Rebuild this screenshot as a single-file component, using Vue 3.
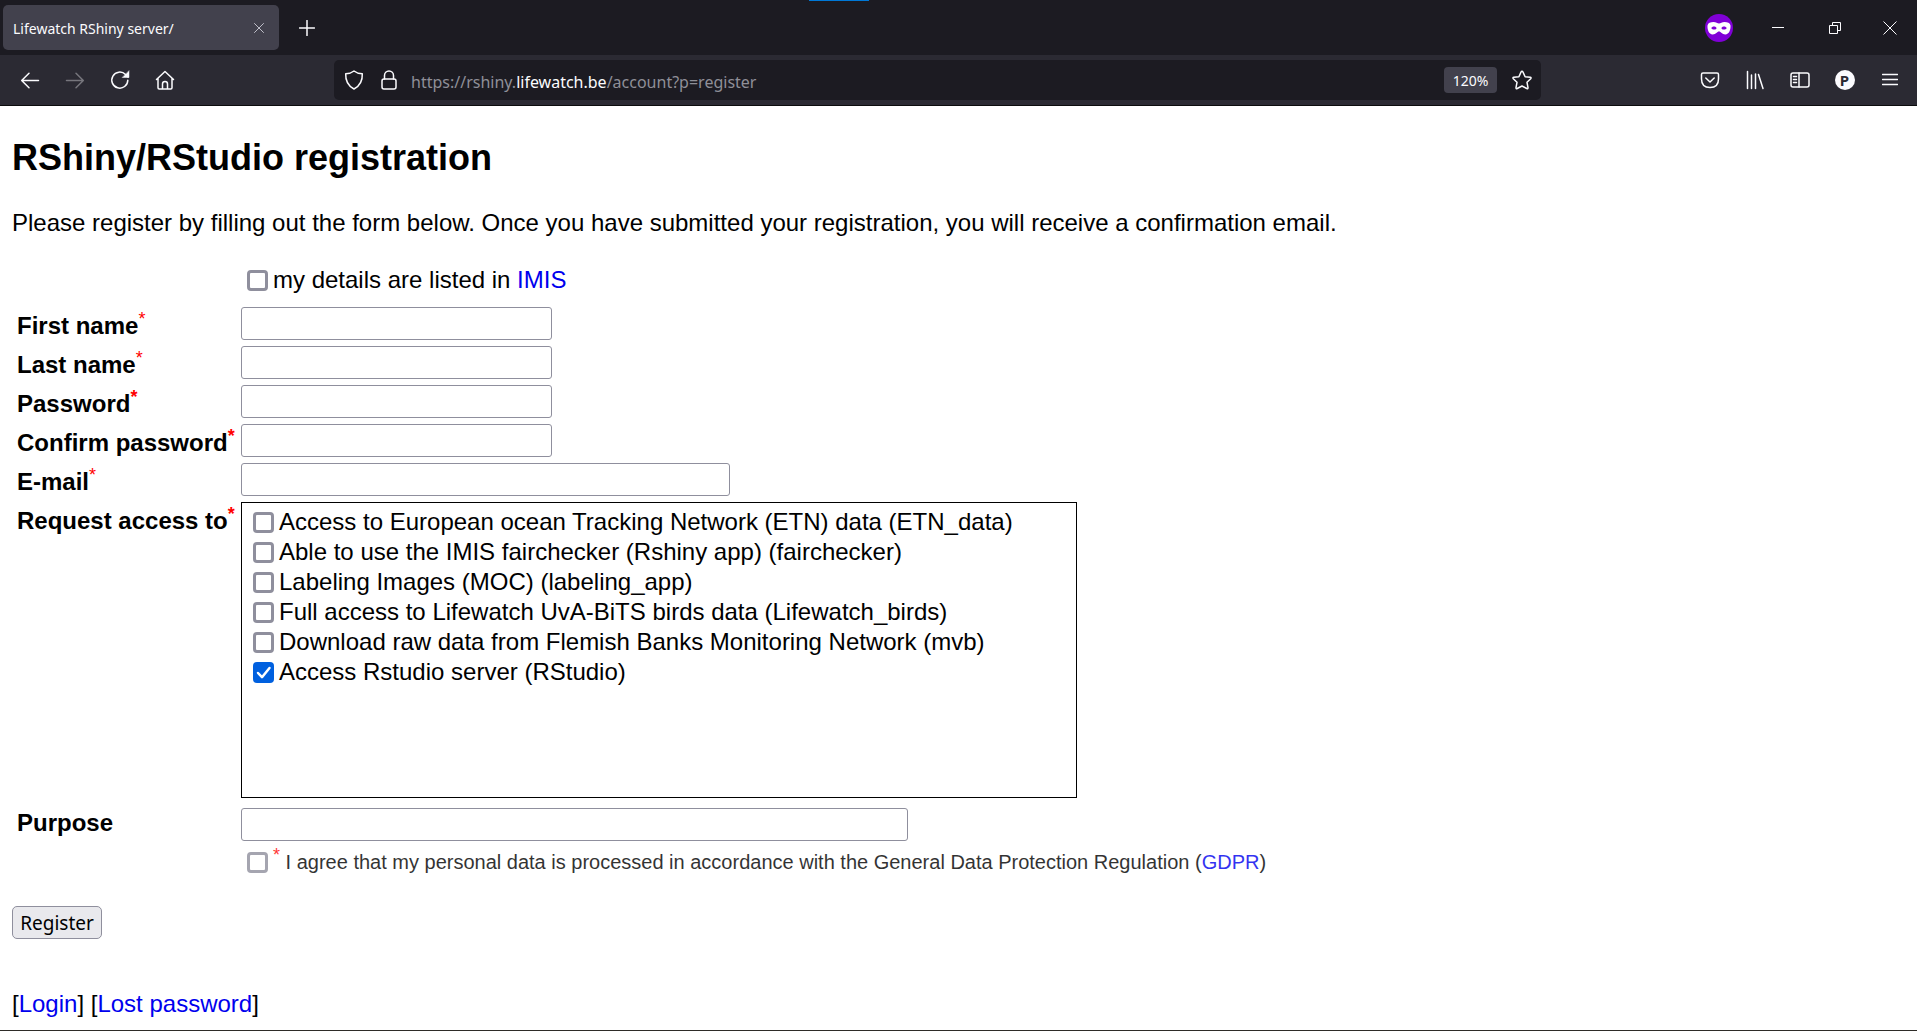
<script setup>
import { ref } from 'vue'

const textFields = [
  { id: 'first-name', label: 'First name', type: 'text', size: 'short', strong: false },
  { id: 'last-name', label: 'Last name', type: 'text', size: 'short', strong: false },
  { id: 'password', label: 'Password', type: 'password', size: 'short', strong: true },
  { id: 'confirm-password', label: 'Confirm password', type: 'password', size: 'short', strong: true },
  { id: 'email', label: 'E-mail', type: 'email', size: 'medium', strong: false },
]

const accessOptions = ref([
  { id: 'ETN_data', label: 'Access to European ocean Tracking Network (ETN) data (ETN_data)', checked: false },
  { id: 'fairchecker', label: 'Able to use the IMIS fairchecker (Rshiny app) (fairchecker)', checked: false },
  { id: 'labeling_app', label: 'Labeling Images (MOC) (labeling_app)', checked: false },
  { id: 'Lifewatch_birds', label: 'Full access to Lifewatch UvA-BiTS birds data (Lifewatch_birds)', checked: false },
  { id: 'mvb', label: 'Download raw data from Flemish Banks Monitoring Network (mvb)', checked: false },
  { id: 'RStudio', label: 'Access Rstudio server (RStudio)', checked: true },
])
</script>

<template>
  <div class="browser">
    <header class="chrome">
      <div class="tab-strip">
        <div class="tab">
          <span class="tab-title">Lifewatch RShiny server/</span>
          <button class="tab-close" type="button" aria-label="Close tab">
            <svg width="12" height="12" viewBox="0 0 12 12"><path d="M1.5 1.5l9 9M10.5 1.5l-9 9" /></svg>
          </button>
        </div>
        <button class="new-tab" type="button" aria-label="New tab">
          <svg width="16" height="16" viewBox="0 0 16 16"><path d="M8 .5v15M.5 8h15" /></svg>
        </button>
        <div class="window-controls">
          <svg class="private" width="28" height="28" viewBox="0 0 28 28" aria-label="Private browsing">
            <circle cx="14" cy="14" r="14" fill="#8000d7" />
            <path fill="#fff" fill-rule="evenodd" d="M2.500 11.500C3 8.800 5.500 8 8.500 8c2.500 0 4 1.500 5.500 1.500S17 8 19.500 8c3 0 5.500.8 6 3.500.3 4-1.300 8.900-5.200 8.900-3.300 0-4.300-2.900-6.300-2.900s-3 2.900-6.300 2.900c-3.900 0-5.500-4.900-5.200-8.900zM6.200 14c.8 1.300 1.900 1.700 3.100 1.600 1.200-.1 2-.8 2.300-1.700-.8-1-1.600-1.400-2.700-1.400-1.200 0-2.100.6-2.700 1.500zm15.600 0c-.8 1.300-1.900 1.700-3.100 1.600-1.200-.1-2-.8-2.300-1.700.8-1 1.600-1.400 2.700-1.400 1.200 0 2.100.6 2.700 1.500z" />
          </svg>
          <button class="window-button" type="button" aria-label="Minimize">
            <svg width="14" height="14" viewBox="0 0 14 14"><path d="M1 6.500h12" /></svg>
          </button>
          <button class="window-button" type="button" aria-label="Restore">
            <svg width="14" height="14" viewBox="0 0 14 14"><path d="M1.500 4.500h8v8h-8zM4.500 4.500v-3h8v8h-3" /></svg>
          </button>
          <button class="window-button" type="button" aria-label="Close">
            <svg width="14" height="14" viewBox="0 0 14 14"><path d="M.5 .5l13 13M13.500 .5l-13 13" /></svg>
          </button>
        </div>
        <div class="accent"></div>
      </div>

      <nav class="toolbar" aria-label="Navigation">
        <button class="tool" type="button" aria-label="Back">
          <svg width="20" height="20" viewBox="0 0 20 20"><path d="M18.500 10.500H1.800M9 3.200L1.700 10.500 9 17.800" /></svg>
        </button>
        <button class="tool dim" type="button" aria-label="Forward" disabled>
          <svg width="20" height="20" viewBox="0 0 20 20"><path d="M1.500 10.500h16.700M11 3.200l7.300 7.300-7.300 7.300" /></svg>
        </button>
        <button class="tool" type="button" aria-label="Reload">
          <svg width="20" height="20" viewBox="0 0 20 20"><path d="M17.800 10.200A8 8 0 1 1 15.500 4.500L18 7" /><path class="solid" d="M19 1v6.500h-6.500z" /></svg>
        </button>
        <button class="tool" type="button" aria-label="Home">
          <svg width="20" height="20" viewBox="0 0 20 20"><path d="M1.500 9.500L10 1.500l8.500 8M3 8.500v9.300q0 1.200 1.200 1.200h11.600q1.200 0 1.200-1.200V8.500M7.500 19v-5q0-2.500 2.500-2.500t2.500 2.500v5" /></svg>
        </button>

        <div class="url-bar">
          <svg class="url-icon" width="20" height="20" viewBox="0 0 20 20"><path d="M10 1Q13.500 3.800 18.300 3.800 18.800 14.500 10 19 1.200 14.500 1.700 3.800 6.500 3.800 10 1z" /></svg>
          <svg class="url-icon" width="20" height="20" viewBox="0 0 20 20"><rect x="3" y="9" width="14" height="10" rx="2" /><path d="M5.500 9V5.500a4.500 4.500 0 0 1 9 0V9" /></svg>
          <span class="url">https://rshiny.<b>lifewatch.be</b>/account?p=register</span>
          <button class="zoom-level" type="button">120%</button>
          <button class="bookmark" type="button" aria-label="Bookmark this page">
            <svg width="20" height="20" viewBox="0 0 20 20"><path d="M10 1.200q.6 0 .9.700l2.200 4.800 5.100.6q1.400.3.500 1.400l-3.700 3.600 1 5.300q.1 1.400-1.200.9L10 16l-4.800 2.500q-1.300.5-1.200-.9l1-5.300-3.700-3.600q-.9-1.100.5-1.400l5.100-.6 2.200-4.800q.3-.7.9-.7z" /></svg>
          </button>
        </div>

        <button class="tool" type="button" aria-label="Save to Pocket">
          <svg width="20" height="20" viewBox="0 0 20 20"><path d="M3 3h14q1.500 0 1.500 1.500V9q0 8.500-8.500 8.500T1.500 9V4.500Q1.500 3 3 3zM5.800 8L10 12l4.200-4" /></svg>
        </button>
        <button class="tool" type="button" aria-label="Library">
          <svg width="20" height="20" viewBox="0 0 20 20"><path d="M2.500 1.500v17M6.500 5v13.500M10.500 4v14.500M13.500 4.500l4.500 14" /></svg>
        </button>
        <button class="tool" type="button" aria-label="Sidebars">
          <svg width="20" height="20" viewBox="0 0 20 20"><rect x="1" y="3" width="18" height="14" rx="2" /><path d="M9 3v14M3.500 6.500h3M3.500 9.500h3M3.500 12.500h3" /></svg>
        </button>
        <button class="tool" type="button" aria-label="Account">
          <span class="avatar">P</span>
        </button>
        <button class="tool" type="button" aria-label="Menu">
          <svg width="16" height="16" viewBox="0 0 16 16"><path d="M.5 2.500h15M.5 7.500h15M.5 12.500h15" /></svg>
        </button>
      </nav>
    </header>

    <main class="page">
      <h2>RShiny/RStudio registration</h2>
      <p class="intro">
        Please register by filling out the form below. Once you have submitted your registration, you will receive a confirmation email.
      </p>

      <form @submit.prevent>
        <div class="row imis">
          <div class="check">
            <input id="imis" type="checkbox" />
            <label for="imis">my details are listed in <a href="#imis">IMIS</a></label>
          </div>
        </div>

        <div v-for="field in textFields" :key="field.id" class="row">
          <label class="name" :for="field.id">{{ field.label }}<sup :class="{ strong: field.strong }">*</sup></label>
          <input :id="field.id" class="box" :class="field.size" :type="field.type" />
        </div>

        <div class="row" role="group" aria-labelledby="access-title">
          <span id="access-title" class="name">Request access to<sup class="strong">*</sup></span>
          <div class="access">
            <div v-for="option in accessOptions" :key="option.id" class="check">
              <input :id="option.id" v-model="option.checked" type="checkbox" />
              <label :for="option.id">{{ option.label }}</label>
            </div>
          </div>
        </div>

        <div class="row purpose">
          <label class="name" for="purpose">Purpose</label>
          <input id="purpose" class="box long" type="text" />
        </div>

        <div class="row gdpr">
          <div class="check">
            <input id="gdpr" type="checkbox" />
            <label for="gdpr"><sup>*</sup> I agree that my personal data is processed in accordance with the General Data Protection Regulation (<a href="#gdpr">GDPR</a>)</label>
          </div>
        </div>

        <button class="register" type="submit">Register</button>
      </form>

      <p class="links">[<a href="#login">Login</a>] [<a href="#lost">Lost password</a>]</p>
    </main>
  </div>
</template>

<style>
body {
  background: #fff;
}
</style>

<style scoped>
.browser {
  display: flex;
  flex-direction: column;
  min-height: 100vh;
  box-sizing: border-box;
  border-bottom: 1px solid #2e2c28;
  font-family: "Liberation Sans", Arial, sans-serif;
  color: #000;
}

/* Browser chrome */
.chrome {
  font-family: "Noto Sans", "Open Sans", sans-serif;
  color: #fbfbfe;
  background: #2b2a33;
  border-bottom: 1px solid #0c0c0d;
}
.chrome button {
  display: flex;
  align-items: center;
  justify-content: center;
  padding: 0;
  border: 0;
  background: none;
  color: inherit;
  font-family: inherit;
}
.chrome svg {
  flex: none;
  fill: none;
  stroke: currentColor;
  stroke-width: 1.5;
  stroke-linecap: round;
  stroke-linejoin: round;
}
.chrome svg .solid {
  fill: currentColor;
  stroke-width: 0.5;
}
.chrome .private {
  stroke: none;
  margin-right: 16px;
}
.tab-strip {
  position: relative;
  display: flex;
  align-items: center;
  height: 55px;
  padding-left: 3px;
  background: #1c1b22;
}
.accent {
  position: absolute;
  top: 0;
  left: calc(50% - 150px);
  width: 60px;
  height: 1px;
  background: #0078d7;
}
.tab {
  display: flex;
  align-items: center;
  justify-content: space-between;
  box-sizing: border-box;
  width: 276px;
  height: 45px;
  padding: 0 14px 0 10px;
  border-radius: 5px;
  background: #42414d;
}
.tab-title {
  padding-top: 2px;
  font-size: 14px;
}
.chrome .tab-close svg {
  stroke: #bfbfc9;
  stroke-width: 1;
}
.chrome .new-tab {
  width: 56px;
  height: 45px;
}
.window-controls {
  display: flex;
  align-items: center;
  margin-left: auto;
}
.chrome .window-button {
  width: 57px;
  height: 45px;
}
.chrome .window-button:last-child {
  width: 54px;
}
.window-button svg {
  stroke-width: 1;
  stroke-linecap: butt;
  stroke-linejoin: miter;
}
.toolbar {
  display: flex;
  align-items: center;
  height: 50px;
  padding: 0 5px 0 7px;
}
.chrome .tool {
  width: 45px;
  height: 40px;
}
.chrome .dim {
  color: #77767d;
}
.url-bar {
  flex: 1;
  display: flex;
  align-items: center;
  height: 40px;
  margin: 0 146px 0 147px;
  box-sizing: border-box;
  padding: 0 9px 0 10px;
  border-radius: 5px;
  background: #1c1b22;
}
.url-icon {
  margin-right: 15px;
}
.url {
  flex: 1;
  margin-left: -3px;
  padding-top: 3px;
  font-size: 16px;
  color: #8f8f98;
}
.url b {
  font-weight: 400;
  color: #fbfbfe;
}
.chrome .zoom-level {
  width: 53px;
  height: 26px;
  margin-right: 15px;
  border-radius: 4px;
  background: #42414d;
  font-size: 14px;
}
.avatar {
  width: 20px;
  height: 20px;
  border-radius: 50%;
  background: #fbfbfe;
  color: #2b2a33;
  font-size: 15px;
  line-height: 20px;
  font-weight: 700;
}

/* Registration page */
.page {
  padding: 31px 12px 12px;
  font-size: 24px;
  line-height: 28px;
}
h2 {
  margin: 0 0 30px;
  font-size: 36px;
  line-height: 42px;
}
.intro {
  margin: 0 0 29px;
}
a {
  color: #00e;
  text-decoration: none;
}
.row {
  display: grid;
  grid-template-columns: 224px 1fr;
  align-items: start;
  margin-bottom: 6px;
  padding-left: 5px;
}
.row > .check,
.box,
.access {
  grid-column: 2;
}
.imis {
  margin-bottom: 13px;
}
.name {
  padding-top: 5px;
  font-weight: 700;
  white-space: nowrap;
}
.purpose .name {
  padding-top: 1px;
}
sup {
  color: #f00;
  font-size: 18px;
  font-weight: 400;
  line-height: 0;
}
sup.strong {
  font-weight: 700;
}
.box {
  box-sizing: border-box;
  height: 33px;
  padding: 2px 4px;
  border: 1px solid #8f8f9d;
  border-radius: 3px;
  background: #fff;
  font: 20px "Liberation Sans", Arial, sans-serif;
}
.short {
  width: 311px;
}
.medium {
  width: 489px;
}
.long {
  width: 667px;
}
.access {
  box-sizing: border-box;
  width: 836px;
  height: 296px;
  margin-bottom: 4px;
  padding: 4px 5px;
  border: 1px solid #000;
}
.check {
  display: flex;
  align-items: center;
  gap: 5px;
  padding-left: 6px;
}
.access .check {
  height: 30px;
}
input[type="checkbox"] {
  appearance: none;
  flex: none;
  width: 21px;
  height: 21px;
  margin: 0;
  border: 3px solid #8f8f9d;
  border-radius: 4px;
  background: #fff;
}
input[type="checkbox"]:checked {
  border: 0;
  background: #0060df url("data:image/svg+xml,%3Csvg xmlns='http://www.w3.org/2000/svg' viewBox='0 0 21 21'%3E%3Cpath d='M5 11l4 4.200 7.500-9.200' fill='none' stroke='%23fff' stroke-width='2.500' stroke-linecap='round' stroke-linejoin='round'/%3E%3C/svg%3E");
}
.gdpr {
  margin-bottom: 30px;
  padding-top: 1px;
  font-size: 20px;
  opacity: 0.8;
}
.gdpr sup {
  font-size: 18px;
}
.register {
  display: block;
  width: 90px;
  height: 33px;
  padding: 0;
  border: 1px solid #8f8f9d;
  border-radius: 5px;
  background: #e9e9ed;
  color: #000;
  font: 19px "Noto Sans", "Open Sans", sans-serif;
  line-height: 28px;
}
.links {
  margin: 51px 0 0;
}
</style>
